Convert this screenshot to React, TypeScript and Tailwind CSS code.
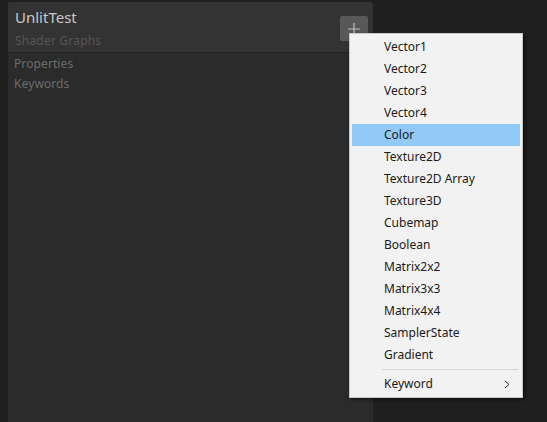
import React from "react";

const items = [
  "Vector1",
  "Vector2",
  "Vector3",
  "Vector4",
  "Color",
  "Texture2D",
  "Texture2D Array",
  "Texture3D",
  "Cubemap",
  "Boolean",
  "Matrix2x2",
  "Matrix3x3",
  "Matrix4x4",
  "SamplerState",
  "Gradient",
];

export default function App() {
  return (
    <div
      className="relative w-[547px] h-[422px] bg-[#1f1f1f] overflow-hidden"
      style={{ fontFamily: '"Noto Sans", "Open Sans", sans-serif' }}
    >
      <div className="ml-[8px] mt-[2px] w-[365px] h-[420px] bg-[#2b2b2b] rounded-tr-[4px] rounded-tl-[2px] flex flex-col">
        <div className="h-[51px] bg-[#333333] border-b border-[#232323] flex items-start justify-between pl-[7px] pr-[5px] rounded-tr-[4px] rounded-tl-[2px]">
          <div className="flex flex-col pt-[5px]">
            <div className="text-[15px] leading-[20px] text-[#c8c8c8]">UnlitTest</div>
            <div className="text-[12px] leading-[18px] mt-[5px] tracking-[0.2px] text-[#565656]">Shader Graphs</div>
          </div>
          <div className="mt-[14px] w-[28px] h-[25px] bg-[#585858] rounded-[2px] flex items-center justify-center">
            <svg width="14" height="14" viewBox="0 0 14 14">
              <path d="M7 1 V13 M1 7 H13" stroke="#bdbdbd" strokeWidth="1.2" />
            </svg>
          </div>
        </div>
        <div className="flex flex-col pl-[6px] pt-[1px] text-[12px] leading-[20px] tracking-[0.1px] text-[#6b6b6b]">
          <div>Properties</div>
          <div>Keywords</div>
        </div>
      </div>

      <div className="absolute left-[349px] top-[33px] w-[174px] bg-[#f2f2f2] border border-[#c8c8c8] shadow-[2px_2px_3px_rgba(0,0,0,0.45)] pt-[2px] pb-[2px] px-[2px]">
        {items.map((t) => (
          <div
            key={t}
            className={`h-[22px] flex items-center pl-[32px] text-[12px] text-[#1a1a1a] ${t === "Color" ? "bg-[#91c9f7]" : ""}`}
          >
            {t}
          </div>
        ))}
        <div className="ml-[30px] mr-[2px] my-[3px] h-px bg-[#d5d5d5]" />
        <div className="h-[22px] flex items-center justify-between pl-[32px] pr-[10px] text-[12px] text-[#1a1a1a]">
          <span>Keyword</span>
          <svg width="6" height="9" viewBox="0 0 6 9">
            <path d="M1 1 L5 4.5 L1 8" fill="none" stroke="#333" strokeWidth="1" />
          </svg>
        </div>
      </div>
    </div>
  );
}
